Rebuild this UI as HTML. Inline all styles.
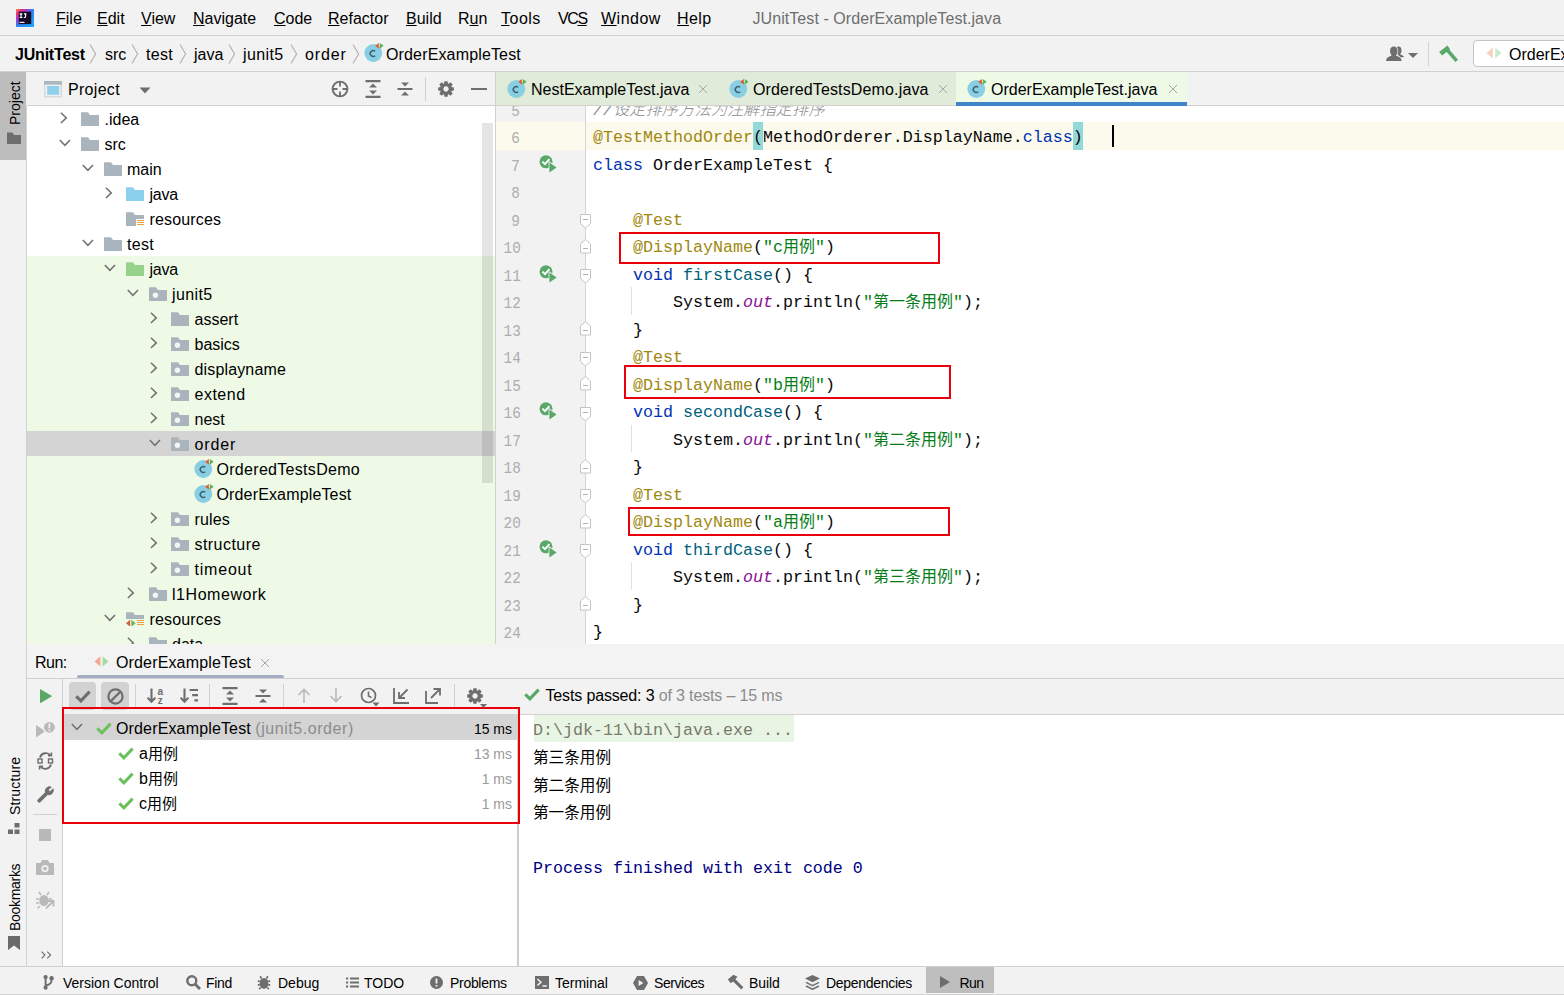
<!DOCTYPE html><html lang="en"><head><meta charset="utf-8"><title>JUnitTest - OrderExampleTest.java</title><style>
*{box-sizing:border-box;margin:0;padding:0}
html,body{width:1564px;height:995px;overflow:hidden;background:#f2f2f2}
body{font-family:"Liberation Sans",sans-serif;font-size:16px;color:#000;position:relative}
.abs{position:absolute}
.cj{font-family:"Liberation Sans","Noto Sans CJK SC",sans-serif;font-style:normal}
.cjm{font-family:"Liberation Mono","Noto Sans CJK SC",monospace;font-style:normal}
u{text-decoration:underline;text-underline-offset:1.2px;text-decoration-thickness:1.3px}
#menubar{left:0;top:0;width:1564px;height:35px;background:#f2f2f2}
#menubar .m{position:absolute;top:9px;line-height:20px;font-size:16px;white-space:nowrap}
#title{position:absolute;top:9px;left:752.5px;line-height:20px;font-size:16px;color:#6e6e6e;white-space:nowrap;letter-spacing:.07px}
.hline{position:absolute;height:1px;background:#d1d1d1}
.vline{position:absolute;width:1px;background:#d1d1d1}
#navbar{left:0;top:36px;width:1564px;height:35px;background:#f2f2f2}
#navbar .b{position:absolute;top:7.5px;line-height:21px;font-size:16px;white-space:nowrap}
.mono{font-family:"Liberation Mono",monospace}
.ic{display:block}span.abs>svg{display:block}.lt{position:relative;top:2px}</style></head><body><div id="menubar" class="abs"><svg class="abs" style="left:16px;top:9px" width="18" height="18" viewBox="0 0 18 18"><defs><radialGradient id="ijg" gradientUnits="userSpaceOnUse" cx="0" cy="0" r="21"><stop offset="0" stop-color="#ff8a3c"/><stop offset=".22" stop-color="#f5307e"/><stop offset=".5" stop-color="#a23ad8"/><stop offset=".8" stop-color="#2f86f6"/><stop offset="1" stop-color="#1ea2ff"/></radialGradient></defs><rect width="18" height="18" fill="url(#ijg)"/><rect x="2.7" y="2.6" width="12.5" height="12.5" fill="#170a24"/><path d="M3.6 4.8h2.8M5 4.8v3.7M3.6 8.5h2.8M9.6 4.3v3q0 1.4-1.7 1.2M8 4.8h2.4" stroke="#fff" stroke-width="1.15" fill="none"/><rect x="3.5" y="12.8" width="5" height="1.1" fill="#fff"/></svg><span class="m" style="left:56px"><u>F</u>ile</span><span class="m" style="left:97px"><u>E</u>dit</span><span class="m" style="left:141px"><u>V</u>iew</span><span class="m" style="left:193px"><u>N</u>avigate</span><span class="m" style="left:274px"><u>C</u>ode</span><span class="m" style="left:328px"><u>R</u>efactor</span><span class="m" style="left:406px"><u>B</u>uild</span><span class="m" style="left:458px">R<u>u</u>n</span><span class="m" style="left:501px"><span style="letter-spacing:.5px"><u>T</u>ools</span></span><span class="m" style="left:558px"><span style="letter-spacing:-1.4px">VC<u>S</u></span></span><span class="m" style="left:601px"><span style="letter-spacing:.5px"><u>W</u>indow</span></span><span class="m" style="left:677px"><span style="letter-spacing:.4px"><u>H</u>elp</span></span><span id="title">JUnitTest - OrderExampleTest.java</span></div><div class="hline" style="left:0;top:35px;width:1564px"></div><div id="navbar" class="abs"><span class="b" style="left:15px"><b style="letter-spacing:-.2px">JUnitTest</b></span><span class="b" style="left:105px">src</span><span class="b" style="left:146px"><span style="letter-spacing:.3px">test</span></span><span class="b" style="left:194px">java</span><span class="b" style="left:243px"><span style="letter-spacing:.4px">junit5</span></span><span class="b" style="left:305px"><span style="letter-spacing:.9px">order</span></span><svg class="abs" style="left:89.2px;top:7.6px" width="8" height="20" viewBox="0 0 8 20"><path d="M1 .5 L6.6 10 L1 19.5" fill="none" stroke="#b0b0b0" stroke-width="1.1"/></svg><svg class="abs" style="left:131.2px;top:7.6px" width="8" height="20" viewBox="0 0 8 20"><path d="M1 .5 L6.6 10 L1 19.5" fill="none" stroke="#b0b0b0" stroke-width="1.1"/></svg><svg class="abs" style="left:179.2px;top:7.6px" width="8" height="20" viewBox="0 0 8 20"><path d="M1 .5 L6.6 10 L1 19.5" fill="none" stroke="#b0b0b0" stroke-width="1.1"/></svg><svg class="abs" style="left:228.2px;top:7.6px" width="8" height="20" viewBox="0 0 8 20"><path d="M1 .5 L6.6 10 L1 19.5" fill="none" stroke="#b0b0b0" stroke-width="1.1"/></svg><svg class="abs" style="left:290.2px;top:7.6px" width="8" height="20" viewBox="0 0 8 20"><path d="M1 .5 L6.6 10 L1 19.5" fill="none" stroke="#b0b0b0" stroke-width="1.1"/></svg><svg class="abs" style="left:352.2px;top:7.6px" width="8" height="20" viewBox="0 0 8 20"><path d="M1 .5 L6.6 10 L1 19.5" fill="none" stroke="#b0b0b0" stroke-width="1.1"/></svg><span class="abs" style="left:363.7px;top:6.7px"><svg class="ic" width="20" height="19" viewBox="0 0 20 19" style=""><circle cx="9.3" cy="10" r="8.9" fill="#89cfe4"/><path d="M11.2 8.3A2.95 2.95 0 1 0 11.2 12.7" fill="none" stroke="#3f5f6d" stroke-width="1.45"/><path d="M11.1 2.85 L14.9 0 L14.9 5.7Z" fill="#e55b33"/><path d="M19.6 2.85 L15.8 0 L15.8 5.7Z" fill="#52b256"/></svg></span><span class="b" style="left:386px;letter-spacing:.15px">OrderExampleTest</span><svg class="abs" style="left:1386px;top:10px" width="34" height="16" viewBox="0 0 34 16"><ellipse cx="12.6" cy="4.4" rx="2.9" ry="3.9" fill="#6e6e6e"/><path d="M11 7.5q5 .6 7.2 3.6l-4 .4z" fill="#6e6e6e"/><g stroke="#f2f2f2" stroke-width="1.6" paint-order="stroke" fill="#6e6e6e"><ellipse cx="7.8" cy="5" rx="3.7" ry="4.5"/><path d="M0 15q0-3.6 5.2-5.2h5.2q5.2 1.6 5.2 5.2z"/></g><rect x="5.5" y="8" width="4.6" height="3" fill="#6e6e6e"/><path d="M22 7h10l-5 5z" fill="#6e6e6e"/></svg><div class="vline" style="left:1428px;top:6px;height:24px"></div><svg class="abs" style="left:1439px;top:9px" width="20" height="18" viewBox="0 0 20 18"><path d="M1.6 8.8 L9.8 2.4" stroke="#59a869" stroke-width="4.6" fill="none"/><path d="M8 4.6 L17.7 15.9" stroke="#59a869" stroke-width="3.6" fill="none"/></svg><div class="abs" style="left:1473px;top:4px;width:110px;height:27px;background:#fff;border:1px solid #c4c4c4;border-radius:4px"></div><span class="abs" style="left:1486px;top:11px"><svg class="ic" width="16" height="12" viewBox="0 0 16 12" style=""><path d="M0.5 6 L6.8 0.6 L6.8 11.4Z" fill="#f9cfc2"/><path d="M15.5 6 L9.2 0.6 L9.2 11.4Z" fill="#cdeaca"/></svg></span><span class="b" style="left:1509px;top:8px">OrderExampleTest</span></div><div class="hline" style="left:0;top:71px;width:1564px"></div><div class="abs" style="left:0;top:72px;width:26px;height:895px;background:#f2f2f2"></div><div class="vline" style="left:26px;top:106px;height:861px"></div><div class="abs" style="left:0;top:72px;width:26px;height:88px;background:#bdbdbd"></div><div class="abs" style="left:15.3px;top:125px;width:0;height:0"><div style="position:absolute;left:0;top:0;transform:rotate(-90deg);transform-origin:0 0;white-space:nowrap;font-size:14px;letter-spacing:0px;line-height:20px;margin-left:-10px">Project</div></div><svg class="abs" style="left:7px;top:132px" width="14" height="12" viewBox="0 0 14 12"><path d="M0 0.5H5.5L7 3H14V12H0Z" fill="#6e6e6e"/></svg><div class="abs" style="left:15.3px;top:815px;width:0;height:0"><div style="position:absolute;left:0;top:0;transform:rotate(-90deg);transform-origin:0 0;white-space:nowrap;font-size:14px;letter-spacing:0.15px;line-height:20px;margin-left:-10px">Structure</div></div><svg class="abs" style="left:8.4px;top:823px" width="12" height="11" viewBox="0 0 12 11"><path d="M6.5 0h5v4.5h-5zM0 6.5h5v4.5h-5zM6.5 6.5h5v4.5h-5z" fill="#6e6e6e"/></svg><div class="abs" style="left:15.3px;top:931px;width:0;height:0"><div style="position:absolute;left:0;top:0;transform:rotate(-90deg);transform-origin:0 0;white-space:nowrap;font-size:14px;letter-spacing:-0.3px;line-height:20px;margin-left:-10px">Bookmarks</div></div><svg class="abs" style="left:8px;top:936px" width="12" height="14" viewBox="0 0 12 14"><path d="M0 0H12V14L6 9.5L0 14Z" fill="#6a6a6a"/></svg><div class="abs" style="left:27px;top:72px;width:468px;height:33px;background:#f2f2f2"></div><svg class="abs" style="left:44px;top:81.4px" width="18" height="16.4" viewBox="0 0 18 16.4"><rect width="18" height="16.4" fill="#d3d9dd"/><rect x="1.4" y="3.6" width="15.2" height="11.4" fill="#eef0f2"/><rect width="18" height="3.6" fill="#adb7be"/><rect x="3.2" y="5" width="12" height="8.8" fill="#8fd0ea"/></svg><span class="abs" style="left:68px;top:80px;font-size:16px;line-height:20px;letter-spacing:.3px">Project</span><svg class="abs" style="left:139px;top:87px" width="12" height="7" viewBox="0 0 12 7"><path d="M0.5 0.5H11.5L6 6.5Z" fill="#6e6e6e"/></svg><svg class="abs" style="left:331px;top:80px" width="18" height="18" viewBox="0 0 18 18"><circle cx="9" cy="9" r="7.4" fill="none" stroke="#6e6e6e" stroke-width="1.9"/><path d="M9 1.5v5M9 11.5v5M1.5 9h5M11.5 9h5" stroke="#6e6e6e" stroke-width="1.8"/></svg><svg class="abs" style="left:365px;top:80px" width="16" height="18" viewBox="0 0 16 18"><path d="M0.5 1.1h15M0.5 16.9h15" stroke="#6e6e6e" stroke-width="2.1"/><path d="M8 3.6 L12 7.6 H4Z M8 14.4 L12 10.4 H4Z" fill="#6e6e6e"/></svg><svg class="abs" style="left:397px;top:80px" width="16" height="18" viewBox="0 0 16 18"><path d="M0.5 9h15" stroke="#6e6e6e" stroke-width="2"/><path d="M8 6.4 L12 2.4 H4Z M8 11.6 L12 15.6 H4Z" fill="#6e6e6e"/></svg><div class="vline" style="left:425px;top:77px;height:24px"></div><svg class="abs" style="left:438px;top:81px" width="16" height="16" viewBox="0 0 16 16"><path d="M15.84 6.41L15.84 9.59L13.56 9.97L13.32 10.54L14.67 12.42L12.42 14.67L10.54 13.32L9.97 13.56L9.59 15.84L6.41 15.84L6.03 13.56L5.46 13.32L3.58 14.67L1.33 12.42L2.68 10.54L2.44 9.97L0.16 9.59L0.16 6.41L2.44 6.03L2.68 5.46L1.33 3.58L3.58 1.33L5.46 2.68L6.03 2.44L6.41 0.16L9.59 0.16L9.97 2.44L10.54 2.68L12.42 1.33L14.67 3.58L13.32 5.46L13.56 6.03Z M8 5.3a2.7 2.7 0 1 0 0.001 0Z" fill="#6e6e6e" fill-rule="evenodd"/></svg><div class="abs" style="left:471px;top:87.5px;width:16px;height:2.6px;background:#6e6e6e"></div><div class="hline" style="left:27px;top:105px;width:469px"></div><div class="abs" style="left:27px;top:106px;width:468px;height:538px;background:#fff;overflow:hidden"><div class="abs" style="left:0;top:150px;width:468px;height:400px;background:#eef9e6"></div><div class="abs" style="left:0;top:325px;width:468px;height:25px;background:#d4d4d4"></div><span class="abs" style="left:32.6px;top:6.3px"><svg class="ic" width="8" height="12" viewBox="0 0 8 12" style=""><path d="M0.9 0.8 L6.3 5.9 L0.9 11" fill="none" stroke="#707070" stroke-width="1.5"/></svg></span><span class="abs" style="left:54px;top:4.5px"><svg class="ic" width="18" height="15" viewBox="0 0 18 15" style=""><path d="M0 1.2 L7 1.2 L9 4 L18 4 L18 15 L0 15 Z" fill="#aab4bd"/></svg></span><span class="abs" style="left:77.5px;top:3px;line-height:21px;white-space:nowrap;letter-spacing:0px">.idea</span><span class="abs" style="left:32px;top:33px"><svg class="ic" width="12" height="8" viewBox="0 0 12 8" style=""><path d="M0.8 0.9 L5.9 6.3 L11 0.9" fill="none" stroke="#707070" stroke-width="1.5"/></svg></span><span class="abs" style="left:54px;top:29.5px"><svg class="ic" width="18" height="15" viewBox="0 0 18 15" style=""><path d="M0 1.2 L7 1.2 L9 4 L18 4 L18 15 L0 15 Z" fill="#aab4bd"/></svg></span><span class="abs" style="left:77.5px;top:28px;line-height:21px;white-space:nowrap;letter-spacing:0px">src</span><span class="abs" style="left:54.5px;top:58px"><svg class="ic" width="12" height="8" viewBox="0 0 12 8" style=""><path d="M0.8 0.9 L5.9 6.3 L11 0.9" fill="none" stroke="#707070" stroke-width="1.5"/></svg></span><span class="abs" style="left:76.5px;top:54.5px"><svg class="ic" width="18" height="15" viewBox="0 0 18 15" style=""><path d="M0 1.2 L7 1.2 L9 4 L18 4 L18 15 L0 15 Z" fill="#aab4bd"/></svg></span><span class="abs" style="left:100px;top:53px;line-height:21px;white-space:nowrap;letter-spacing:0px">main</span><span class="abs" style="left:77.6px;top:81.3px"><svg class="ic" width="8" height="12" viewBox="0 0 8 12" style=""><path d="M0.9 0.8 L6.3 5.9 L0.9 11" fill="none" stroke="#707070" stroke-width="1.5"/></svg></span><span class="abs" style="left:99px;top:79.5px"><svg class="ic" width="18" height="15" viewBox="0 0 18 15" style=""><path d="M0 1.2 L7 1.2 L9 4 L18 4 L18 15 L0 15 Z" fill="#8bd0ec"/></svg></span><span class="abs" style="left:122.5px;top:78px;line-height:21px;white-space:nowrap;letter-spacing:-0.2px">java</span><span class="abs" style="left:99px;top:104.5px"><svg class="ic" width="18" height="15" viewBox="0 0 18 15" style=""><path d="M0 1.2 L7 1.2 L9 4 L18 4 L18 15 L0 15 Z" fill="#aab4bd"/><rect x="10" y="8" width="8.5" height="8" fill="#fff"/><path d="M11 9.5h7M11 11.5h7M11 13.5h7M11 15.5h7" stroke="#e8a33d" stroke-width="1.1"/></svg></span><span class="abs" style="left:122.5px;top:103px;line-height:21px;white-space:nowrap;letter-spacing:0.15px">resources</span><span class="abs" style="left:54.5px;top:133px"><svg class="ic" width="12" height="8" viewBox="0 0 12 8" style=""><path d="M0.8 0.9 L5.9 6.3 L11 0.9" fill="none" stroke="#707070" stroke-width="1.5"/></svg></span><span class="abs" style="left:76.5px;top:129.5px"><svg class="ic" width="18" height="15" viewBox="0 0 18 15" style=""><path d="M0 1.2 L7 1.2 L9 4 L18 4 L18 15 L0 15 Z" fill="#aab4bd"/></svg></span><span class="abs" style="left:100px;top:128px;line-height:21px;white-space:nowrap;letter-spacing:0.3px">test</span><span class="abs" style="left:77px;top:158px"><svg class="ic" width="12" height="8" viewBox="0 0 12 8" style=""><path d="M0.8 0.9 L5.9 6.3 L11 0.9" fill="none" stroke="#707070" stroke-width="1.5"/></svg></span><span class="abs" style="left:99px;top:154.5px"><svg class="ic" width="18" height="15" viewBox="0 0 18 15" style=""><path d="M0 1.2 L7 1.2 L9 4 L18 4 L18 15 L0 15 Z" fill="#96d28c"/></svg></span><span class="abs" style="left:122.5px;top:153px;line-height:21px;white-space:nowrap;letter-spacing:-0.2px">java</span><span class="abs" style="left:99.5px;top:183px"><svg class="ic" width="12" height="8" viewBox="0 0 12 8" style=""><path d="M0.8 0.9 L5.9 6.3 L11 0.9" fill="none" stroke="#707070" stroke-width="1.5"/></svg></span><span class="abs" style="left:121.5px;top:179.5px"><svg class="ic" width="18" height="15" viewBox="0 0 18 15" style=""><path d="M0 1.2 L7 1.2 L9 4 L18 4 L18 15 L0 15 Z" fill="#aab4bd"/><circle cx="6.4" cy="9.2" r="2.7" fill="#f3f7f4"/></svg></span><span class="abs" style="left:145px;top:178px;line-height:21px;white-space:nowrap;letter-spacing:0.4px">junit5</span><span class="abs" style="left:122.6px;top:206.3px"><svg class="ic" width="8" height="12" viewBox="0 0 8 12" style=""><path d="M0.9 0.8 L6.3 5.9 L0.9 11" fill="none" stroke="#707070" stroke-width="1.5"/></svg></span><span class="abs" style="left:144px;top:204.5px"><svg class="ic" width="18" height="15" viewBox="0 0 18 15" style=""><path d="M0 1.2 L7 1.2 L9 4 L18 4 L18 15 L0 15 Z" fill="#aab4bd"/></svg></span><span class="abs" style="left:167.5px;top:203px;line-height:21px;white-space:nowrap;letter-spacing:0px">assert</span><span class="abs" style="left:122.6px;top:231.3px"><svg class="ic" width="8" height="12" viewBox="0 0 8 12" style=""><path d="M0.9 0.8 L6.3 5.9 L0.9 11" fill="none" stroke="#707070" stroke-width="1.5"/></svg></span><span class="abs" style="left:144px;top:229.5px"><svg class="ic" width="18" height="15" viewBox="0 0 18 15" style=""><path d="M0 1.2 L7 1.2 L9 4 L18 4 L18 15 L0 15 Z" fill="#aab4bd"/><circle cx="6.4" cy="9.2" r="2.7" fill="#f3f7f4"/></svg></span><span class="abs" style="left:167.5px;top:228px;line-height:21px;white-space:nowrap;letter-spacing:0px">basics</span><span class="abs" style="left:122.6px;top:256.3px"><svg class="ic" width="8" height="12" viewBox="0 0 8 12" style=""><path d="M0.9 0.8 L6.3 5.9 L0.9 11" fill="none" stroke="#707070" stroke-width="1.5"/></svg></span><span class="abs" style="left:144px;top:254.5px"><svg class="ic" width="18" height="15" viewBox="0 0 18 15" style=""><path d="M0 1.2 L7 1.2 L9 4 L18 4 L18 15 L0 15 Z" fill="#aab4bd"/><circle cx="6.4" cy="9.2" r="2.7" fill="#f3f7f4"/></svg></span><span class="abs" style="left:167.5px;top:253px;line-height:21px;white-space:nowrap;letter-spacing:0.15px">displayname</span><span class="abs" style="left:122.6px;top:281.3px"><svg class="ic" width="8" height="12" viewBox="0 0 8 12" style=""><path d="M0.9 0.8 L6.3 5.9 L0.9 11" fill="none" stroke="#707070" stroke-width="1.5"/></svg></span><span class="abs" style="left:144px;top:279.5px"><svg class="ic" width="18" height="15" viewBox="0 0 18 15" style=""><path d="M0 1.2 L7 1.2 L9 4 L18 4 L18 15 L0 15 Z" fill="#aab4bd"/><circle cx="6.4" cy="9.2" r="2.7" fill="#f3f7f4"/></svg></span><span class="abs" style="left:167.5px;top:278px;line-height:21px;white-space:nowrap;letter-spacing:0.5px">extend</span><span class="abs" style="left:122.6px;top:306.3px"><svg class="ic" width="8" height="12" viewBox="0 0 8 12" style=""><path d="M0.9 0.8 L6.3 5.9 L0.9 11" fill="none" stroke="#707070" stroke-width="1.5"/></svg></span><span class="abs" style="left:144px;top:304.5px"><svg class="ic" width="18" height="15" viewBox="0 0 18 15" style=""><path d="M0 1.2 L7 1.2 L9 4 L18 4 L18 15 L0 15 Z" fill="#aab4bd"/><circle cx="6.4" cy="9.2" r="2.7" fill="#f3f7f4"/></svg></span><span class="abs" style="left:167.5px;top:303px;line-height:21px;white-space:nowrap;letter-spacing:0px">nest</span><span class="abs" style="left:122px;top:333px"><svg class="ic" width="12" height="8" viewBox="0 0 12 8" style=""><path d="M0.8 0.9 L5.9 6.3 L11 0.9" fill="none" stroke="#707070" stroke-width="1.5"/></svg></span><span class="abs" style="left:144px;top:329.5px"><svg class="ic" width="18" height="15" viewBox="0 0 18 15" style=""><path d="M0 1.2 L7 1.2 L9 4 L18 4 L18 15 L0 15 Z" fill="#aab4bd"/><circle cx="6.4" cy="9.2" r="2.7" fill="#f3f7f4"/></svg></span><span class="abs" style="left:167.5px;top:328px;line-height:21px;white-space:nowrap;letter-spacing:0.9px">order</span><span class="abs" style="left:166.5px;top:353px"><svg class="ic" width="20" height="19" viewBox="0 0 20 19" style=""><circle cx="9.3" cy="10" r="8.9" fill="#89cfe4"/><path d="M11.2 8.3A2.95 2.95 0 1 0 11.2 12.7" fill="none" stroke="#3f5f6d" stroke-width="1.45"/><path d="M11.1 2.85 L14.9 0 L14.9 5.7Z" fill="#e55b33"/><path d="M19.6 2.85 L15.8 0 L15.8 5.7Z" fill="#52b256"/></svg></span><span class="abs" style="left:189.5px;top:353px;line-height:21px;white-space:nowrap;letter-spacing:0.3px">OrderedTestsDemo</span><span class="abs" style="left:166.5px;top:378px"><svg class="ic" width="20" height="19" viewBox="0 0 20 19" style=""><circle cx="9.3" cy="10" r="8.9" fill="#89cfe4"/><path d="M11.2 8.3A2.95 2.95 0 1 0 11.2 12.7" fill="none" stroke="#3f5f6d" stroke-width="1.45"/><path d="M11.1 2.85 L14.9 0 L14.9 5.7Z" fill="#e55b33"/><path d="M19.6 2.85 L15.8 0 L15.8 5.7Z" fill="#52b256"/></svg></span><span class="abs" style="left:189.5px;top:378px;line-height:21px;white-space:nowrap;letter-spacing:0.15px">OrderExampleTest</span><span class="abs" style="left:122.6px;top:406.3px"><svg class="ic" width="8" height="12" viewBox="0 0 8 12" style=""><path d="M0.9 0.8 L6.3 5.9 L0.9 11" fill="none" stroke="#707070" stroke-width="1.5"/></svg></span><span class="abs" style="left:144px;top:404.5px"><svg class="ic" width="18" height="15" viewBox="0 0 18 15" style=""><path d="M0 1.2 L7 1.2 L9 4 L18 4 L18 15 L0 15 Z" fill="#aab4bd"/><circle cx="6.4" cy="9.2" r="2.7" fill="#f3f7f4"/></svg></span><span class="abs" style="left:167.5px;top:403px;line-height:21px;white-space:nowrap;letter-spacing:0.15px">rules</span><span class="abs" style="left:122.6px;top:431.3px"><svg class="ic" width="8" height="12" viewBox="0 0 8 12" style=""><path d="M0.9 0.8 L6.3 5.9 L0.9 11" fill="none" stroke="#707070" stroke-width="1.5"/></svg></span><span class="abs" style="left:144px;top:429.5px"><svg class="ic" width="18" height="15" viewBox="0 0 18 15" style=""><path d="M0 1.2 L7 1.2 L9 4 L18 4 L18 15 L0 15 Z" fill="#aab4bd"/><circle cx="6.4" cy="9.2" r="2.7" fill="#f3f7f4"/></svg></span><span class="abs" style="left:167.5px;top:428px;line-height:21px;white-space:nowrap;letter-spacing:0.45px">structure</span><span class="abs" style="left:122.6px;top:456.3px"><svg class="ic" width="8" height="12" viewBox="0 0 8 12" style=""><path d="M0.9 0.8 L6.3 5.9 L0.9 11" fill="none" stroke="#707070" stroke-width="1.5"/></svg></span><span class="abs" style="left:144px;top:454.5px"><svg class="ic" width="18" height="15" viewBox="0 0 18 15" style=""><path d="M0 1.2 L7 1.2 L9 4 L18 4 L18 15 L0 15 Z" fill="#aab4bd"/><circle cx="6.4" cy="9.2" r="2.7" fill="#f3f7f4"/></svg></span><span class="abs" style="left:167.5px;top:453px;line-height:21px;white-space:nowrap;letter-spacing:0.8px">timeout</span><span class="abs" style="left:100.1px;top:481.3px"><svg class="ic" width="8" height="12" viewBox="0 0 8 12" style=""><path d="M0.9 0.8 L6.3 5.9 L0.9 11" fill="none" stroke="#707070" stroke-width="1.5"/></svg></span><span class="abs" style="left:121.5px;top:479.5px"><svg class="ic" width="18" height="15" viewBox="0 0 18 15" style=""><path d="M0 1.2 L7 1.2 L9 4 L18 4 L18 15 L0 15 Z" fill="#aab4bd"/><circle cx="6.4" cy="9.2" r="2.7" fill="#f3f7f4"/></svg></span><span class="abs" style="left:145px;top:478px;line-height:21px;white-space:nowrap;letter-spacing:0.55px">l1Homework</span><span class="abs" style="left:77px;top:508px"><svg class="ic" width="12" height="8" viewBox="0 0 12 8" style=""><path d="M0.8 0.9 L5.9 6.3 L11 0.9" fill="none" stroke="#707070" stroke-width="1.5"/></svg></span><span class="abs" style="left:99px;top:504.5px"><svg class="ic" width="18" height="15" viewBox="0 0 18 15" style=""><path d="M0 1.2 L7 1.2 L9 4 L18 4 L18 15 L0 15 Z" fill="#aab4bd"/><rect x="0" y="8" width="19" height="8" fill="#eef9e6"/><path d="M0 12.3 L4.2 8.8 L4.2 15.8Z" fill="#e05a36"/><path d="M9.6 12.3 L5.4 8.8 L5.4 15.8Z" fill="#5fb865"/><path d="M11 9.5h7M11 11.5h7M11 13.5h7M11 15.5h7" stroke="#e8a33d" stroke-width="1.1"/></svg></span><span class="abs" style="left:122.5px;top:503px;line-height:21px;white-space:nowrap;letter-spacing:0.15px">resources</span><span class="abs" style="left:100.1px;top:531.3px"><svg class="ic" width="8" height="12" viewBox="0 0 8 12" style=""><path d="M0.9 0.8 L6.3 5.9 L0.9 11" fill="none" stroke="#707070" stroke-width="1.5"/></svg></span><span class="abs" style="left:121.5px;top:529.5px"><svg class="ic" width="18" height="15" viewBox="0 0 18 15" style=""><path d="M0 1.2 L7 1.2 L9 4 L18 4 L18 15 L0 15 Z" fill="#aab4bd"/></svg></span><span class="abs" style="left:145px;top:528px;line-height:21px;white-space:nowrap;letter-spacing:0px">data</span><div class="abs" style="left:455px;top:16.5px;width:11px;height:360px;background:rgba(0,0,0,.1)"></div></div><div class="vline" style="left:495px;top:72px;height:572px"></div><div class="abs" style="left:496px;top:72px;width:1068px;height:33px;background:#f2f2f2"></div><div class="abs" style="left:496px;top:72px;width:460px;height:33px;background:#e1ebd9"></div><div class="abs" style="left:956px;top:72px;width:231px;height:33px;background:#eef9e6"></div><div class="abs" style="left:956px;top:102px;width:231px;height:4px;background:#4083c9"></div><span class="abs" style="left:506.6px;top:79.2px"><svg class="ic" width="20" height="19" viewBox="0 0 20 19" style=""><circle cx="9.3" cy="10" r="8.9" fill="#89cfe4"/><path d="M11.2 8.3A2.95 2.95 0 1 0 11.2 12.7" fill="none" stroke="#3f5f6d" stroke-width="1.45"/><path d="M11.1 2.85 L14.9 0 L14.9 5.7Z" fill="#e55b33"/><path d="M19.6 2.85 L15.8 0 L15.8 5.7Z" fill="#52b256"/></svg></span><span class="abs" style="left:531px;top:80px;line-height:20px;white-space:nowrap">NestExampleTest.java</span><span class="abs" style="left:698px;top:84px"><svg class="ic" width="10" height="10" viewBox="0 0 10 10" style=""><path d="M1 1L9 9M9 1L1 9" stroke="#a6a6a6" stroke-width="1" fill="none"/></svg></span><span class="abs" style="left:728.6px;top:79.2px"><svg class="ic" width="20" height="19" viewBox="0 0 20 19" style=""><circle cx="9.3" cy="10" r="8.9" fill="#89cfe4"/><path d="M11.2 8.3A2.95 2.95 0 1 0 11.2 12.7" fill="none" stroke="#3f5f6d" stroke-width="1.45"/><path d="M11.1 2.85 L14.9 0 L14.9 5.7Z" fill="#e55b33"/><path d="M19.6 2.85 L15.8 0 L15.8 5.7Z" fill="#52b256"/></svg></span><span class="abs" style="left:753px;top:80px;line-height:20px;white-space:nowrap"><span style="letter-spacing:.15px">OrderedTestsDemo.java</span></span><span class="abs" style="left:938px;top:84px"><svg class="ic" width="10" height="10" viewBox="0 0 10 10" style=""><path d="M1 1L9 9M9 1L1 9" stroke="#a6a6a6" stroke-width="1" fill="none"/></svg></span><span class="abs" style="left:966.6px;top:79.2px"><svg class="ic" width="20" height="19" viewBox="0 0 20 19" style=""><circle cx="9.3" cy="10" r="8.9" fill="#89cfe4"/><path d="M11.2 8.3A2.95 2.95 0 1 0 11.2 12.7" fill="none" stroke="#3f5f6d" stroke-width="1.45"/><path d="M11.1 2.85 L14.9 0 L14.9 5.7Z" fill="#e55b33"/><path d="M19.6 2.85 L15.8 0 L15.8 5.7Z" fill="#52b256"/></svg></span><span class="abs" style="left:991px;top:80px;line-height:20px;white-space:nowrap">OrderExampleTest.java</span><span class="abs" style="left:1168px;top:84px"><svg class="ic" width="10" height="10" viewBox="0 0 10 10" style=""><path d="M1 1L9 9M9 1L1 9" stroke="#a6a6a6" stroke-width="1" fill="none"/></svg></span><div class="hline" style="left:496px;top:105px;width:460px"></div><div class="hline" style="left:1187px;top:105px;width:377px"></div><div id="ed" class="abs mono" style="left:496px;top:106px;width:1068px;height:538px;background:#fff;overflow:hidden;font-size:16.67px"><div class="abs" style="left:0;top:0;width:89px;height:538px;background:#f2f2f2"></div><div class="abs" style="left:0;top:16px;width:1068px;height:27.5px;background:#fcfaed"></div><div class="vline" style="left:89px;top:0;height:538px;background:#d6d6d6"></div><div class="abs" style="left:257px;top:16px;width:10px;height:28px;background:#93d9d9"></div><div class="abs" style="left:577px;top:16px;width:10px;height:28px;background:#93d9d9"></div><div class="abs" style="left:0;top:-11.5px;width:24px;height:27.5px;line-height:27.5px;text-align:right;color:#adadad;font-size:16.5px"><span class="lt" style="display:inline-block;top:3px;left:.4px;transform:scaleX(.87);transform-origin:right center">5</span></div><div class="abs" style="left:97px;top:-11.5px;height:27.5px;line-height:27.5px;white-space:pre;color:#080808"><span class="lt"><span style="color:#8c8c8c;font-style:italic">//</span><span class="cjm" style="font-size:16.3px;color:#8c8c8c;font-style:italic;font-weight:300">设定排序方法为注解指定排序</span></span></div><div class="abs" style="left:0;top:16px;width:24px;height:27.5px;line-height:27.5px;text-align:right;color:#adadad;font-size:16.5px"><span class="lt" style="display:inline-block;top:3px;left:.4px;transform:scaleX(.87);transform-origin:right center">6</span></div><div class="abs" style="left:97px;top:16px;height:27.5px;line-height:27.5px;white-space:pre;color:#080808"><span class="lt"><span style="color:#9e880d">@TestMethodOrder</span>(MethodOrderer.DisplayName.<span style="color:#0033b3">class</span>)</span></div><div class="abs" style="left:0;top:43.5px;width:24px;height:27.5px;line-height:27.5px;text-align:right;color:#adadad;font-size:16.5px"><span class="lt" style="display:inline-block;top:3px;left:.4px;transform:scaleX(.87);transform-origin:right center">7</span></div><div class="abs" style="left:97px;top:43.5px;height:27.5px;line-height:27.5px;white-space:pre;color:#080808"><span class="lt"><span style="color:#0033b3">class</span> OrderExampleTest {</span></div><div class="abs" style="left:0;top:71px;width:24px;height:27.5px;line-height:27.5px;text-align:right;color:#adadad;font-size:16.5px"><span class="lt" style="display:inline-block;top:3px;left:.4px;transform:scaleX(.87);transform-origin:right center">8</span></div><div class="abs" style="left:97px;top:71px;height:27.5px;line-height:27.5px;white-space:pre;color:#080808"><span class="lt"></span></div><div class="abs" style="left:0;top:98.5px;width:24px;height:27.5px;line-height:27.5px;text-align:right;color:#adadad;font-size:16.5px"><span class="lt" style="display:inline-block;top:3px;left:.4px;transform:scaleX(.87);transform-origin:right center">9</span></div><div class="abs" style="left:97px;top:98.5px;height:27.5px;line-height:27.5px;white-space:pre;color:#080808"><span class="lt">    <span style="color:#9e880d">@Test</span></span></div><div class="abs" style="left:0;top:126px;width:24px;height:27.5px;line-height:27.5px;text-align:right;color:#adadad;font-size:16.5px"><span class="lt" style="display:inline-block;top:3px;left:.4px;transform:scaleX(.87);transform-origin:right center">10</span></div><div class="abs" style="left:97px;top:126px;height:27.5px;line-height:27.5px;white-space:pre;color:#080808"><span class="lt">    <span style="color:#9e880d">@DisplayName</span>(<span style="color:#067d17">"c</span><span class="cjm" style="font-size:16px;color:#067d17">用例</span><span style="color:#067d17">"</span>)</span></div><div class="abs" style="left:0;top:153.5px;width:24px;height:27.5px;line-height:27.5px;text-align:right;color:#adadad;font-size:16.5px"><span class="lt" style="display:inline-block;top:3px;left:.4px;transform:scaleX(.87);transform-origin:right center">11</span></div><div class="abs" style="left:97px;top:153.5px;height:27.5px;line-height:27.5px;white-space:pre;color:#080808"><span class="lt">    <span style="color:#0033b3">void</span> <span style="color:#00627a">firstCase</span>() {</span></div><div class="abs" style="left:0;top:181px;width:24px;height:27.5px;line-height:27.5px;text-align:right;color:#adadad;font-size:16.5px"><span class="lt" style="display:inline-block;top:3px;left:.4px;transform:scaleX(.87);transform-origin:right center">12</span></div><div class="abs" style="left:97px;top:181px;height:27.5px;line-height:27.5px;white-space:pre;color:#080808"><span class="lt">        System.<span style="color:#871094;font-style:italic">out</span>.println(<span style="color:#067d17">"</span><span class="cjm" style="font-size:16px;color:#067d17">第一条用例</span><span style="color:#067d17">"</span>);</span></div><div class="abs" style="left:0;top:208.5px;width:24px;height:27.5px;line-height:27.5px;text-align:right;color:#adadad;font-size:16.5px"><span class="lt" style="display:inline-block;top:3px;left:.4px;transform:scaleX(.87);transform-origin:right center">13</span></div><div class="abs" style="left:97px;top:208.5px;height:27.5px;line-height:27.5px;white-space:pre;color:#080808"><span class="lt">    }</span></div><div class="abs" style="left:0;top:236px;width:24px;height:27.5px;line-height:27.5px;text-align:right;color:#adadad;font-size:16.5px"><span class="lt" style="display:inline-block;top:3px;left:.4px;transform:scaleX(.87);transform-origin:right center">14</span></div><div class="abs" style="left:97px;top:236px;height:27.5px;line-height:27.5px;white-space:pre;color:#080808"><span class="lt">    <span style="color:#9e880d">@Test</span></span></div><div class="abs" style="left:0;top:263.5px;width:24px;height:27.5px;line-height:27.5px;text-align:right;color:#adadad;font-size:16.5px"><span class="lt" style="display:inline-block;top:3px;left:.4px;transform:scaleX(.87);transform-origin:right center">15</span></div><div class="abs" style="left:97px;top:263.5px;height:27.5px;line-height:27.5px;white-space:pre;color:#080808"><span class="lt">    <span style="color:#9e880d">@DisplayName</span>(<span style="color:#067d17">"b</span><span class="cjm" style="font-size:16px;color:#067d17">用例</span><span style="color:#067d17">"</span>)</span></div><div class="abs" style="left:0;top:291px;width:24px;height:27.5px;line-height:27.5px;text-align:right;color:#adadad;font-size:16.5px"><span class="lt" style="display:inline-block;top:3px;left:.4px;transform:scaleX(.87);transform-origin:right center">16</span></div><div class="abs" style="left:97px;top:291px;height:27.5px;line-height:27.5px;white-space:pre;color:#080808"><span class="lt">    <span style="color:#0033b3">void</span> <span style="color:#00627a">secondCase</span>() {</span></div><div class="abs" style="left:0;top:318.5px;width:24px;height:27.5px;line-height:27.5px;text-align:right;color:#adadad;font-size:16.5px"><span class="lt" style="display:inline-block;top:3px;left:.4px;transform:scaleX(.87);transform-origin:right center">17</span></div><div class="abs" style="left:97px;top:318.5px;height:27.5px;line-height:27.5px;white-space:pre;color:#080808"><span class="lt">        System.<span style="color:#871094;font-style:italic">out</span>.println(<span style="color:#067d17">"</span><span class="cjm" style="font-size:16px;color:#067d17">第二条用例</span><span style="color:#067d17">"</span>);</span></div><div class="abs" style="left:0;top:346px;width:24px;height:27.5px;line-height:27.5px;text-align:right;color:#adadad;font-size:16.5px"><span class="lt" style="display:inline-block;top:3px;left:.4px;transform:scaleX(.87);transform-origin:right center">18</span></div><div class="abs" style="left:97px;top:346px;height:27.5px;line-height:27.5px;white-space:pre;color:#080808"><span class="lt">    }</span></div><div class="abs" style="left:0;top:373.5px;width:24px;height:27.5px;line-height:27.5px;text-align:right;color:#adadad;font-size:16.5px"><span class="lt" style="display:inline-block;top:3px;left:.4px;transform:scaleX(.87);transform-origin:right center">19</span></div><div class="abs" style="left:97px;top:373.5px;height:27.5px;line-height:27.5px;white-space:pre;color:#080808"><span class="lt">    <span style="color:#9e880d">@Test</span></span></div><div class="abs" style="left:0;top:401px;width:24px;height:27.5px;line-height:27.5px;text-align:right;color:#adadad;font-size:16.5px"><span class="lt" style="display:inline-block;top:3px;left:.4px;transform:scaleX(.87);transform-origin:right center">20</span></div><div class="abs" style="left:97px;top:401px;height:27.5px;line-height:27.5px;white-space:pre;color:#080808"><span class="lt">    <span style="color:#9e880d">@DisplayName</span>(<span style="color:#067d17">"a</span><span class="cjm" style="font-size:16px;color:#067d17">用例</span><span style="color:#067d17">"</span>)</span></div><div class="abs" style="left:0;top:428.5px;width:24px;height:27.5px;line-height:27.5px;text-align:right;color:#adadad;font-size:16.5px"><span class="lt" style="display:inline-block;top:3px;left:.4px;transform:scaleX(.87);transform-origin:right center">21</span></div><div class="abs" style="left:97px;top:428.5px;height:27.5px;line-height:27.5px;white-space:pre;color:#080808"><span class="lt">    <span style="color:#0033b3">void</span> <span style="color:#00627a">thirdCase</span>() {</span></div><div class="abs" style="left:0;top:456px;width:24px;height:27.5px;line-height:27.5px;text-align:right;color:#adadad;font-size:16.5px"><span class="lt" style="display:inline-block;top:3px;left:.4px;transform:scaleX(.87);transform-origin:right center">22</span></div><div class="abs" style="left:97px;top:456px;height:27.5px;line-height:27.5px;white-space:pre;color:#080808"><span class="lt">        System.<span style="color:#871094;font-style:italic">out</span>.println(<span style="color:#067d17">"</span><span class="cjm" style="font-size:16px;color:#067d17">第三条用例</span><span style="color:#067d17">"</span>);</span></div><div class="abs" style="left:0;top:483.5px;width:24px;height:27.5px;line-height:27.5px;text-align:right;color:#adadad;font-size:16.5px"><span class="lt" style="display:inline-block;top:3px;left:.4px;transform:scaleX(.87);transform-origin:right center">23</span></div><div class="abs" style="left:97px;top:483.5px;height:27.5px;line-height:27.5px;white-space:pre;color:#080808"><span class="lt">    }</span></div><div class="abs" style="left:0;top:511px;width:24px;height:27.5px;line-height:27.5px;text-align:right;color:#adadad;font-size:16.5px"><span class="lt" style="display:inline-block;top:3px;left:.4px;transform:scaleX(.87);transform-origin:right center">24</span></div><div class="abs" style="left:97px;top:511px;height:27.5px;line-height:27.5px;white-space:pre;color:#080808"><span class="lt">}</span></div><span class="abs" style="left:42.5px;top:48.5px"><svg width="19" height="18" viewBox="0 0 19 18"><circle cx="7" cy="6.8" r="6.5" fill="#59a869"/><path d="M3.4 6.6 L6 9.2 L10.4 4.2" fill="none" stroke="#fff" stroke-width="1.9"/><path d="M10.4 7.4 L17.6 12.4 L10.4 17.4Z" fill="#59a869" stroke="#f2f2f2" stroke-width="1.6" paint-order="stroke"/></svg></span><span class="abs" style="left:42.5px;top:158.5px"><svg width="19" height="18" viewBox="0 0 19 18"><circle cx="7" cy="6.8" r="6.5" fill="#59a869"/><path d="M3.4 6.6 L6 9.2 L10.4 4.2" fill="none" stroke="#fff" stroke-width="1.9"/><path d="M10.4 7.4 L17.6 12.4 L10.4 17.4Z" fill="#59a869" stroke="#f2f2f2" stroke-width="1.6" paint-order="stroke"/></svg></span><span class="abs" style="left:42.5px;top:296px"><svg width="19" height="18" viewBox="0 0 19 18"><circle cx="7" cy="6.8" r="6.5" fill="#59a869"/><path d="M3.4 6.6 L6 9.2 L10.4 4.2" fill="none" stroke="#fff" stroke-width="1.9"/><path d="M10.4 7.4 L17.6 12.4 L10.4 17.4Z" fill="#59a869" stroke="#f2f2f2" stroke-width="1.6" paint-order="stroke"/></svg></span><span class="abs" style="left:42.5px;top:433.5px"><svg width="19" height="18" viewBox="0 0 19 18"><circle cx="7" cy="6.8" r="6.5" fill="#59a869"/><path d="M3.4 6.6 L6 9.2 L10.4 4.2" fill="none" stroke="#fff" stroke-width="1.9"/><path d="M10.4 7.4 L17.6 12.4 L10.4 17.4Z" fill="#59a869" stroke="#f2f2f2" stroke-width="1.6" paint-order="stroke"/></svg></span><span class="abs" style="left:83.5px;top:108px"><svg width="11" height="15" viewBox="0 0 11 15"><path d="M0.5 0.5H10.5V9.5L5.5 14L0.5 9.5Z" fill="#fff" stroke="#c4c4c4"/><path d="M3 5.5H8" stroke="#b0b0b0"/></svg></span><span class="abs" style="left:83.5px;top:132.8px"><svg width="11" height="15" viewBox="0 0 11 15"><path d="M0.5 14H10.5V5L5.5 0.5L0.5 5Z" fill="#fff" stroke="#c4c4c4"/><path d="M3 9.5H8" stroke="#b0b0b0"/></svg></span><span class="abs" style="left:83.5px;top:163px"><svg width="11" height="15" viewBox="0 0 11 15"><path d="M0.5 0.5H10.5V9.5L5.5 14L0.5 9.5Z" fill="#fff" stroke="#c4c4c4"/><path d="M3 5.5H8" stroke="#b0b0b0"/></svg></span><span class="abs" style="left:83.5px;top:215.3px"><svg width="11" height="15" viewBox="0 0 11 15"><path d="M0.5 14H10.5V5L5.5 0.5L0.5 5Z" fill="#fff" stroke="#c4c4c4"/><path d="M3 9.5H8" stroke="#b0b0b0"/></svg></span><span class="abs" style="left:83.5px;top:245.5px"><svg width="11" height="15" viewBox="0 0 11 15"><path d="M0.5 0.5H10.5V9.5L5.5 14L0.5 9.5Z" fill="#fff" stroke="#c4c4c4"/><path d="M3 5.5H8" stroke="#b0b0b0"/></svg></span><span class="abs" style="left:83.5px;top:270.3px"><svg width="11" height="15" viewBox="0 0 11 15"><path d="M0.5 14H10.5V5L5.5 0.5L0.5 5Z" fill="#fff" stroke="#c4c4c4"/><path d="M3 9.5H8" stroke="#b0b0b0"/></svg></span><span class="abs" style="left:83.5px;top:300.5px"><svg width="11" height="15" viewBox="0 0 11 15"><path d="M0.5 0.5H10.5V9.5L5.5 14L0.5 9.5Z" fill="#fff" stroke="#c4c4c4"/><path d="M3 5.5H8" stroke="#b0b0b0"/></svg></span><span class="abs" style="left:83.5px;top:352.8px"><svg width="11" height="15" viewBox="0 0 11 15"><path d="M0.5 14H10.5V5L5.5 0.5L0.5 5Z" fill="#fff" stroke="#c4c4c4"/><path d="M3 9.5H8" stroke="#b0b0b0"/></svg></span><span class="abs" style="left:83.5px;top:383px"><svg width="11" height="15" viewBox="0 0 11 15"><path d="M0.5 0.5H10.5V9.5L5.5 14L0.5 9.5Z" fill="#fff" stroke="#c4c4c4"/><path d="M3 5.5H8" stroke="#b0b0b0"/></svg></span><span class="abs" style="left:83.5px;top:407.8px"><svg width="11" height="15" viewBox="0 0 11 15"><path d="M0.5 14H10.5V5L5.5 0.5L0.5 5Z" fill="#fff" stroke="#c4c4c4"/><path d="M3 9.5H8" stroke="#b0b0b0"/></svg></span><span class="abs" style="left:83.5px;top:438px"><svg width="11" height="15" viewBox="0 0 11 15"><path d="M0.5 0.5H10.5V9.5L5.5 14L0.5 9.5Z" fill="#fff" stroke="#c4c4c4"/><path d="M3 5.5H8" stroke="#b0b0b0"/></svg></span><span class="abs" style="left:83.5px;top:490.3px"><svg width="11" height="15" viewBox="0 0 11 15"><path d="M0.5 14H10.5V5L5.5 0.5L0.5 5Z" fill="#fff" stroke="#c4c4c4"/><path d="M3 9.5H8" stroke="#b0b0b0"/></svg></span><div class="vline" style="left:135px;top:181px;height:27.5px;background:#e0e0e0"></div><div class="vline" style="left:135px;top:318.5px;height:27.5px;background:#e0e0e0"></div><div class="vline" style="left:135px;top:456px;height:27.5px;background:#e0e0e0"></div><div class="abs" style="left:616px;top:19px;width:2px;height:22px;background:#000"></div><div class="abs" style="left:123px;top:126px;width:321px;height:32px;border:2px solid #e9000c"></div><div class="abs" style="left:128px;top:259px;width:327px;height:34px;border:2px solid #e9000c"></div><div class="abs" style="left:132px;top:401px;width:322px;height:29px;border:2px solid #e9000c"></div></div><div class="abs" style="left:27px;top:644px;width:1537px;height:35px;background:#f3f3f3"></div><span class="abs" style="left:35px;top:653px;line-height:20px;letter-spacing:-.5px">Run:</span><span class="abs" style="left:93.7px;top:654.6px"><svg class="ic" width="15" height="12.8" viewBox="0 0 16 12" style=""><path d="M0.5 6 L6.8 0.6 L6.8 11.4Z" fill="#f1aa90"/><path d="M15.5 6 L9.2 0.6 L9.2 11.4Z" fill="#a8da9f"/></svg></span><span class="abs" style="left:116px;top:653px;line-height:20px;white-space:nowrap;letter-spacing:.15px">OrderExampleTest</span><span class="abs" style="left:260px;top:658px"><svg class="ic" width="10" height="10" viewBox="0 0 10 10" style=""><path d="M1 1L9 9M9 1L1 9" stroke="#a6a6a6" stroke-width="1" fill="none"/></svg></span><div class="abs" style="left:77px;top:674.6px;width:207px;height:4px;background:#a5adc4;border-radius:2px"></div><div class="hline" style="left:27px;top:678px;width:1537px"></div><div class="abs" style="left:27px;top:679px;width:1537px;height:34px;background:#f2f2f2"></div><div class="vline" style="left:62px;top:679px;height:288px"></div><span class="abs" style="left:39.7px;top:689px"><svg width="12.3" height="14.4" viewBox="0 0 12 14"><path d="M0 0L12 7L0 14Z" fill="#59a869"/></svg></span><div class="abs" style="left:69px;top:682px;width:27px;height:27.5px;background:#d2d2d2;border-radius:4px"></div><div class="abs" style="left:101px;top:682px;width:28px;height:27.5px;background:#d2d2d2;border-radius:4px"></div><span class="abs" style="left:75px;top:690px"><svg width="16" height="13" viewBox="0 0 16 13"><path d="M1.3 6.4 L5.9 10.8 L14.6 1.6" fill="none" stroke="#6e6e6e" stroke-width="3.2"/></svg></span><span class="abs" style="left:107px;top:688px"><svg width="17" height="17" viewBox="0 0 17 17"><circle cx="8.5" cy="8.5" r="7.1" fill="none" stroke="#6e6e6e" stroke-width="2.2"/><path d="M3.6 13.4L13.4 3.6" stroke="#6e6e6e" stroke-width="2.2"/></svg></span><div class="vline" style="left:135px;top:684px;height:24px"></div><span class="abs" style="left:147px;top:688px"><svg width="18" height="16" viewBox="0 0 18 16"><path d="M4.5 .5v13M0.6 9.6L4.5 13.8L8.4 9.6" fill="none" stroke="#6e6e6e" stroke-width="2.1"/><text x="10.4" y="6.6" style="font:bold 10px 'Liberation Sans',sans-serif" fill="#6e6e6e">a</text><text x="10.7" y="15.6" style="font:bold 10px 'Liberation Sans',sans-serif" fill="#6e6e6e">z</text></svg></span><span class="abs" style="left:180px;top:688px"><svg width="18" height="16" viewBox="0 0 18 16"><path d="M4.5 .5v13M0.6 9.6L4.5 13.8L8.4 9.6" fill="none" stroke="#6e6e6e" stroke-width="2.1"/><path d="M9.6 2h8.4M12.2 7.2h5.8M14.4 12.4h3.6" stroke="#6e6e6e" stroke-width="2.2"/></svg></span><div class="vline" style="left:209px;top:684px;height:24px"></div><span class="abs" style="left:222px;top:687px"><svg width="16" height="18" viewBox="0 0 16 18"><path d="M0.5 1.1h15M0.5 16.9h15" stroke="#6e6e6e" stroke-width="2.1"/><path d="M8 3.6L12 7.6H4ZM8 14.4L12 10.4H4Z" fill="#6e6e6e"/></svg></span><span class="abs" style="left:255px;top:687px"><svg width="16" height="18" viewBox="0 0 16 18"><path d="M0.5 9h15" stroke="#6e6e6e" stroke-width="2"/><path d="M8 6.4L12 2.4H4ZM8 11.6L12 15.6H4Z" fill="#6e6e6e"/></svg></span><div class="vline" style="left:283px;top:684px;height:24px"></div><span class="abs" style="left:297px;top:688px"><svg width="14" height="15" viewBox="0 0 14 15"><path d="M7 15V1.5M1.5 7L7 1.5L12.5 7" fill="none" stroke="#b9b9b9" stroke-width="1.6"/></svg></span><span class="abs" style="left:329px;top:688px"><svg width="14" height="15" viewBox="0 0 14 15"><path d="M7 0V13.5M1.5 8L7 13.5L12.5 8" fill="none" stroke="#b9b9b9" stroke-width="1.6"/></svg></span><span class="abs" style="left:360px;top:687px"><svg width="20" height="20" viewBox="0 0 20 20"><circle cx="8.5" cy="8.5" r="7" fill="none" stroke="#6e6e6e" stroke-width="1.7"/><path d="M8.5 4.4V9L11.6 10.6" fill="none" stroke="#6e6e6e" stroke-width="1.6"/><path d="M12.5 15.5h7L16 19.5Z" fill="#6e6e6e" stroke="#f2f2f2" stroke-width="1" paint-order="stroke"/></svg></span><span class="abs" style="left:393px;top:687px"><svg width="17" height="17" viewBox="0 0 17 17"><path d="M1 1V16H16" fill="none" stroke="#6e6e6e" stroke-width="1.8"/><path d="M14.5 2.5L6 11M6 5V11H12" fill="none" stroke="#6e6e6e" stroke-width="1.8"/></svg></span><span class="abs" style="left:425px;top:687px"><svg width="17" height="17" viewBox="0 0 17 17"><path d="M1 4V16H13" fill="none" stroke="#6e6e6e" stroke-width="1.8"/><path d="M6 11L14.5 2.5M8.5 2H15V8.5" fill="none" stroke="#6e6e6e" stroke-width="1.8"/></svg></span><div class="vline" style="left:454px;top:684px;height:24px"></div><svg class="abs" style="left:467px;top:688px" width="16" height="16" viewBox="0 0 16 16"><path d="M15.84 6.41L15.84 9.59L13.56 9.97L13.32 10.54L14.67 12.42L12.42 14.67L10.54 13.32L9.97 13.56L9.59 15.84L6.41 15.84L6.03 13.56L5.46 13.32L3.58 14.67L1.33 12.42L2.68 10.54L2.44 9.97L0.16 9.59L0.16 6.41L2.44 6.03L2.68 5.46L1.33 3.58L3.58 1.33L5.46 2.68L6.03 2.44L6.41 0.16L9.59 0.16L9.97 2.44L10.54 2.68L12.42 1.33L14.67 3.58L13.32 5.46L13.56 6.03Z M8 5.3a2.7 2.7 0 1 0 0.001 0Z" fill="#6e6e6e" fill-rule="evenodd"/></svg><span class="abs" style="left:523.5px;top:688.3px"><svg width="16" height="13" viewBox="0 0 16 13"><path d="M1.3 6.4 L5.9 10.8 L14.6 1.6" fill="none" stroke="#59a869" stroke-width="3.2"/></svg></span><span class="abs" style="left:545.5px;top:686px;line-height:20px;white-space:nowrap;letter-spacing:-.15px">Tests passed: 3 <span style="color:#8c8c8c">of 3 tests – 15 ms</span></span><div class="hline" style="left:519px;top:714px;width:1045px"></div><span class="abs" style="left:36px;top:719px"><svg width="20" height="19" viewBox="0 0 20 19"><path d="M0 6L9.4 12.2L0 18.4Z" fill="#b9b9b9"/><circle cx="13.4" cy="8.3" r="6" fill="#b9b9b9" stroke="#f2f2f2" stroke-width="1.2"/><path d="M13.4 4.6V9.2M13.4 10.6V12.2" stroke="#f2f2f2" stroke-width="1.7"/></svg></span><span class="abs" style="left:37px;top:751px"><svg width="17" height="20" viewBox="0 0 17 20"><path d="M3 6.5a6 6 0 0 1 10.5-2M14 13.5a6 6 0 0 1-10.5 2" fill="none" stroke="#6e6e6e" stroke-width="1.9"/><path d="M11 4.8h3.4V1.4M6 15.2H2.6v3.4" fill="none" stroke="#6e6e6e" stroke-width="1.6"/><rect x="1" y="8" width="4" height="4" fill="none" stroke="#6e6e6e" stroke-width="1.4"/><rect x="11.5" y="8" width="4" height="4" fill="none" stroke="#6e6e6e" stroke-width="1.4"/></svg></span><span class="abs" style="left:37px;top:786px"><svg width="17" height="17" viewBox="0 0 17 17"><path d="M1.2 13.6L8.4 6.4a4.4 4.4 0 0 1 5.8-5.4L11.2 4l1.8 1.8 3-3a4.4 4.4 0 0 1-5.4 5.8L3.4 15.8a1.5 1.5 0 0 1-2.2-2.2Z" fill="#6e6e6e" stroke="#6e6e6e" stroke-width=".9" stroke-linejoin="round"/></svg></span><div class="hline" style="left:33px;top:814px;width:24px"></div><div class="abs" style="left:39px;top:829px;width:12px;height:12px;background:#b9b9b9"></div><span class="abs" style="left:36px;top:860px"><svg width="18" height="15" viewBox="0 0 18 15"><path d="M0 3h4.5l1.5-3h6l1.5 3H18v12H0Z" fill="#b9b9b9"/><circle cx="9" cy="8.6" r="3.6" fill="#f2f2f2"/><circle cx="9" cy="8.6" r="1.9" fill="#b9b9b9"/></svg></span><span class="abs" style="left:36px;top:891px"><svg width="19" height="18" viewBox="0 0 19 18"><ellipse cx="8" cy="9.5" rx="4.6" ry="5.6" fill="#b9b9b9"/><path d="M5 4l-2-3M11 4l2-3M3.4 8H0M3.4 12H0M12.6 8H16M4 15l-2.4 2.4" stroke="#b9b9b9" stroke-width="1.5"/><path d="M10 17.5l7-7M12 10h5.5v5.5" fill="none" stroke="#b9b9b9" stroke-width="1.8"/></svg></span><svg class="abs" style="left:40.5px;top:951px" width="11" height="8" viewBox="0 0 11 8"><path d="M.6 .6L4 4L.6 7.4M6.2 .6L9.6 4L6.2 7.4" fill="none" stroke="#6e6e6e" stroke-width="1.1"/></svg><div class="abs" style="left:63px;top:714px;width:455px;height:252px;background:#fff"></div><div class="abs" style="left:63px;top:714px;width:455px;height:26px;background:#d4d4d4"></div><span class="abs" style="left:71px;top:723px"><svg class="ic" width="12" height="8" viewBox="0 0 12 8" style=""><path d="M0.8 0.9 L5.9 6.3 L11 0.9" fill="none" stroke="#707070" stroke-width="1.5"/></svg></span><span class="abs" style="left:96px;top:721.5px"><svg width="16" height="13" viewBox="0 0 16 13"><path d="M1.3 6.4 L5.9 10.8 L14.6 1.6" fill="none" stroke="#6cc05c" stroke-width="3"/></svg></span><span class="abs" style="left:116px;top:718px;line-height:21px;white-space:nowrap"><span style="letter-spacing:.15px">OrderExampleTest</span> <span style="color:#8c8c8c;letter-spacing:.55px">(junit5.order)</span></span><span class="abs" style="left:412px;top:719px;width:100px;text-align:right;line-height:21px;font-size:14px">15 ms</span><span class="abs" style="left:118px;top:746.5px"><svg width="16" height="13" viewBox="0 0 16 13"><path d="M1.3 6.4 L5.9 10.8 L14.6 1.6" fill="none" stroke="#6cc05c" stroke-width="3"/></svg></span><span class="abs" style="left:139px;top:743px;line-height:21px;white-space:nowrap">a<span class="cj" style="font-size:15px;color:#000">用例</span></span><span class="abs" style="left:412px;top:744px;width:100px;text-align:right;line-height:21px;font-size:14px;color:#9a9a9a">13 ms</span><span class="abs" style="left:118px;top:771.5px"><svg width="16" height="13" viewBox="0 0 16 13"><path d="M1.3 6.4 L5.9 10.8 L14.6 1.6" fill="none" stroke="#6cc05c" stroke-width="3"/></svg></span><span class="abs" style="left:139px;top:768px;line-height:21px;white-space:nowrap">b<span class="cj" style="font-size:15px;color:#000">用例</span></span><span class="abs" style="left:412px;top:769px;width:100px;text-align:right;line-height:21px;font-size:14px;color:#9a9a9a">1 ms</span><span class="abs" style="left:118px;top:796.5px"><svg width="16" height="13" viewBox="0 0 16 13"><path d="M1.3 6.4 L5.9 10.8 L14.6 1.6" fill="none" stroke="#6cc05c" stroke-width="3"/></svg></span><span class="abs" style="left:139px;top:793px;line-height:21px;white-space:nowrap">c<span class="cj" style="font-size:15px;color:#000">用例</span></span><span class="abs" style="left:412px;top:794px;width:100px;text-align:right;line-height:21px;font-size:14px;color:#9a9a9a">1 ms</span><div class="abs" style="left:517px;top:714px;width:2px;height:252px;background:#cdcdcd"></div><div class="abs mono" style="left:519px;top:715px;width:1045px;height:251px;background:#fff;font-size:16.67px;overflow:hidden"><div class="abs" style="left:14.5px;top:0px;width:260px;height:26.5px;background:#e8f4e4"></div><div class="abs" style="left:14px;top:0px;line-height:27.5px;white-space:pre;color:#7a7a6a"><span class="lt">D:\jdk-11\bin\java.exe ...</span></div><div class="abs" style="left:14px;top:28px;line-height:27.5px;white-space:pre"><span class="lt"><span class="cjm" style="font-size:15.6px;color:#000">第三条用例</span></span></div><div class="abs" style="left:14px;top:55.5px;line-height:27.5px;white-space:pre"><span class="lt"><span class="cjm" style="font-size:15.6px;color:#000">第二条用例</span></span></div><div class="abs" style="left:14px;top:83px;line-height:27.5px;white-space:pre"><span class="lt"><span class="cjm" style="font-size:15.6px;color:#000">第一条用例</span></span></div><div class="abs" style="left:14px;top:137.5px;line-height:27.5px;white-space:pre;color:#00007f"><span class="lt">Process finished with exit code 0</span></div></div><div class="abs" style="left:62px;top:707px;width:458px;height:117px;border:2px solid #e9000c"></div><span class="abs" style="left:479.5px;top:704px"><svg width="7" height="4" viewBox="0 0 7 4"><path d="M0 0H7L3.5 4Z" fill="#6e6e6e"/></svg></span><div class="hline" style="left:0;top:966px;width:1564px"></div><div class="abs" style="left:0;top:967px;width:1564px;height:28px;background:#f2f2f2"></div><div class="abs" style="left:926px;top:967px;width:68px;height:26px;background:#bebebe"></div><div class="hline" style="left:0;top:994px;width:1564px"></div><span class="abs" style="left:63px;top:973px;font-size:14px;letter-spacing:0px;line-height:20px;white-space:nowrap">Version Control</span><span class="abs" style="left:206px;top:973px;font-size:14px;letter-spacing:-0.35px;line-height:20px;white-space:nowrap">Find</span><span class="abs" style="left:278px;top:973px;font-size:14px;letter-spacing:0px;line-height:20px;white-space:nowrap">Debug</span><span class="abs" style="left:364px;top:973px;font-size:14px;letter-spacing:0px;line-height:20px;white-space:nowrap">TODO</span><span class="abs" style="left:450px;top:973px;font-size:14px;letter-spacing:-0.3px;line-height:20px;white-space:nowrap">Problems</span><span class="abs" style="left:555px;top:973px;font-size:14px;letter-spacing:0px;line-height:20px;white-space:nowrap">Terminal</span><span class="abs" style="left:654px;top:973px;font-size:14px;letter-spacing:-0.45px;line-height:20px;white-space:nowrap">Services</span><span class="abs" style="left:749px;top:973px;font-size:14px;letter-spacing:-0.1px;line-height:20px;white-space:nowrap">Build</span><span class="abs" style="left:826px;top:973px;font-size:14px;letter-spacing:-0.3px;line-height:20px;white-space:nowrap">Dependencies</span><span class="abs" style="left:959.5px;top:973px;font-size:14px;letter-spacing:-0.6px;line-height:20px;white-space:nowrap">Run</span><svg class="abs" style="left:43px;top:975px" width="11" height="15" viewBox="0 0 11 15"><path d="M2.6 1.5V13M2.6 10.4q6-.4 6-6" fill="none" stroke="#6e6e6e" stroke-width="1.9"/><circle cx="8.6" cy="3.2" r="2.2" fill="#6e6e6e"/><circle cx="2.6" cy="2.1" r="2.1" fill="#6e6e6e"/><circle cx="2.6" cy="12.7" r="2.1" fill="#6e6e6e"/></svg><svg class="abs" style="left:186px;top:975px" width="15" height="15" viewBox="0 0 15 15"><circle cx="5.8" cy="5.8" r="4.5" fill="none" stroke="#6e6e6e" stroke-width="2.4"/><path d="M9 9L14 14" stroke="#6e6e6e" stroke-width="2.9"/></svg><svg class="abs" style="left:257px;top:975px" width="14" height="15" viewBox="0 0 14 15"><ellipse cx="7" cy="8.4" rx="4.4" ry="5.4" fill="#6e6e6e"/><path d="M4.6 3.6L3.2 1.2M9.4 3.6L10.8 1.2M2.8 6.2H.8M2.8 9.8H.8M11.2 6.2H13.2M11.2 9.8H13.2M3.6 12.6l-1.5 1.5M10.4 12.6l1.5 1.5" stroke="#6e6e6e" stroke-width="1.7"/></svg><svg class="abs" style="left:346px;top:977px" width="13" height="11" viewBox="0 0 13 11"><path d="M0 1.5h2.2M4 1.5h9M0 5.5h2.2M4 5.5h9M0 9.5h2.2M4 9.5h9" stroke="#6e6e6e" stroke-width="1.9"/></svg><svg class="abs" style="left:430px;top:976px" width="13" height="13" viewBox="0 0 13 13"><circle cx="6.5" cy="6.5" r="6.5" fill="#6e6e6e"/><path d="M6.5 2.6V7.4M6.5 9V10.6" stroke="#f2f2f2" stroke-width="1.8"/></svg><svg class="abs" style="left:535px;top:976px" width="14" height="13" viewBox="0 0 14 13"><rect width="14" height="13" fill="#6e6e6e"/><path d="M2.4 3L6 6.2L2.4 9.4M7.4 10h4.4" fill="none" stroke="#f2f2f2" stroke-width="1.5"/></svg><svg class="abs" style="left:633px;top:976px" width="15" height="14" viewBox="0 0 15 14"><path d="M4 0H11L15 7L11 14H4L0 7Z" fill="#6e6e6e"/><path d="M5.6 4L10.4 7L5.6 10Z" fill="#f2f2f2"/></svg><svg class="abs" style="left:727px;top:974px" width="17" height="16" viewBox="0 0 17 16"><path d="M0.8 5.6L6.4 0.8L10.4 2.8L8.4 5.2L16.4 13.2L14.2 15.4L6.2 7.4L3.8 9.2Z" fill="#6e6e6e"/></svg><svg class="abs" style="left:805px;top:975px" width="15" height="15" viewBox="0 0 15 15"><path d="M7.5 0L15 3.6L7.5 7.2L0 3.6Z" fill="#6e6e6e"/><path d="M1 7.4L7.5 10.6L14 7.4M1 11L7.5 14.2L14 11" fill="none" stroke="#6e6e6e" stroke-width="1.6"/></svg><svg class="abs" style="left:939.7px;top:975.8px" width="10" height="12.3" viewBox="0 0 10 12.3"><path d="M0 0L10 6L0 12Z" fill="#6e6e6e"/></svg></body></html>
